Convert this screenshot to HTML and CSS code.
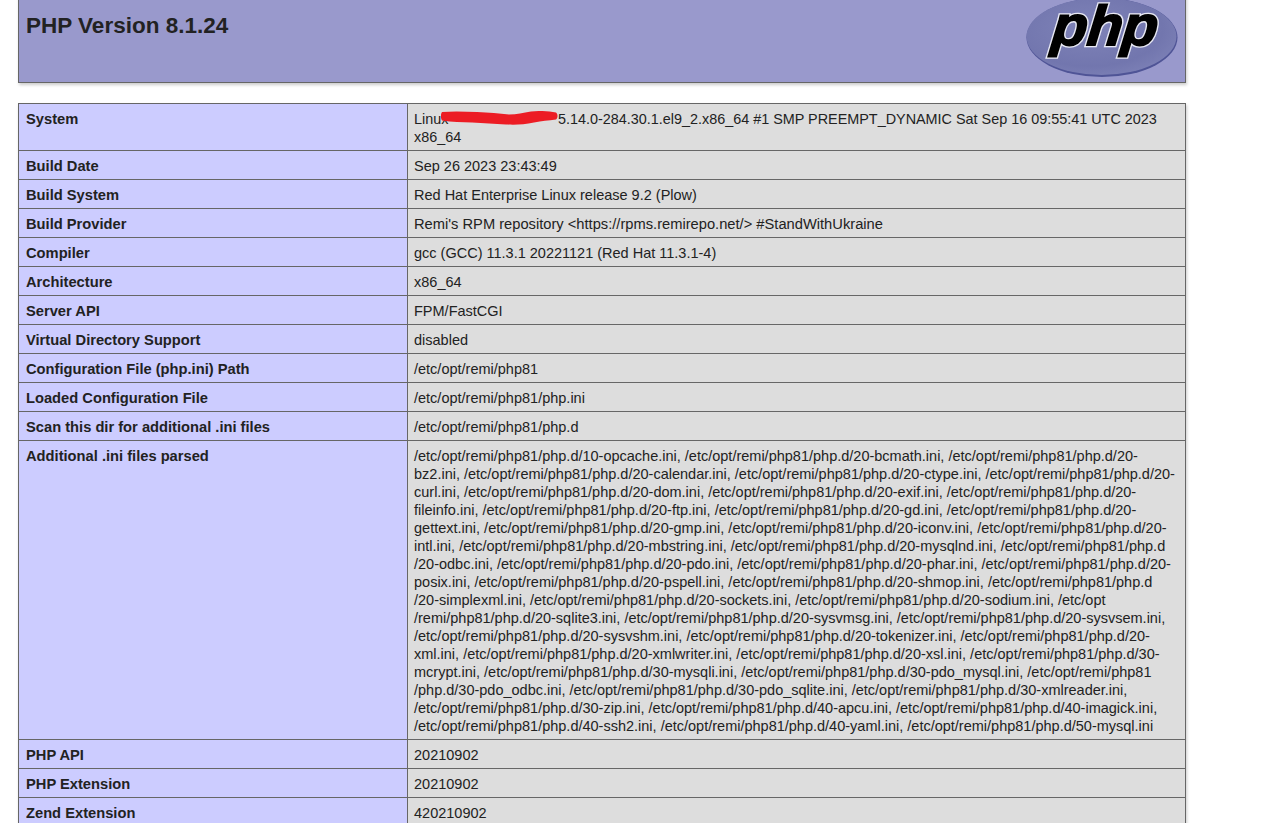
FILE: index.html
```html
<!DOCTYPE html>
<html lang="en">
<head>
<meta charset="utf-8">
<title>PHP 8.1.24 - phpinfo()</title>
<link rel="stylesheet" href="styles.css">
</head>
<body>
<div class="center">
<table class="tbl head-table">
<tr class="h"><td>
<div class="head-row">
<h1 class="p">PHP Version 8.1.24</h1>
<svg class="logo" viewBox="0 0 152 80" role="img" aria-label="PHP logo">
<defs>
<radialGradient id="oval" cx="0.42" cy="0.4" r="0.75">
<stop offset="0" stop-color="#7f83b8"/>
<stop offset="0.65" stop-color="#7276ae"/>
<stop offset="0.95" stop-color="#7f83b8"/>
</radialGradient>
</defs>
<ellipse cx="76" cy="39.500" rx="75.500" ry="39.500" fill="#4f5496"/>
<ellipse cx="75.500" cy="38.500" rx="75" ry="38.500" fill="url(#oval)"/>
<g transform="translate(8 0) skewX(-6) scale(1.03 1)">
<text class="logo-halo" x="21" y="47">php</text>
<text class="logo-text" x="21" y="47">php</text>
</g>
</svg>
</div>
</td></tr>
</table>
<div class="sys-wrap">
<table class="tbl">
<tr><td class="e">System</td><td class="v v-narrow">Linux<span class="host"></span>5.14.0-284.30.1.el9_2.x86_64 #1 SMP PREEMPT_DYNAMIC Sat Sep 16 09:55:41 UTC 2023 x86_64</td></tr>
<tr><td class="e">Build Date</td><td class="v">Sep 26 2023 23:43:49</td></tr>
<tr><td class="e">Build System</td><td class="v">Red Hat Enterprise Linux release 9.2 (Plow)</td></tr>
<tr><td class="e">Build Provider</td><td class="v v-wide">Remi's RPM repository &lt;https://rpms.remirepo.net/&gt; #StandWithUkraine</td></tr>
<tr><td class="e">Compiler</td><td class="v">gcc (GCC) 11.3.1 20221121 (Red Hat 11.3.1-4)</td></tr>
<tr><td class="e">Architecture</td><td class="v">x86_64</td></tr>
<tr><td class="e">Server API</td><td class="v">FPM/FastCGI</td></tr>
<tr><td class="e">Virtual Directory Support</td><td class="v">disabled</td></tr>
<tr><td class="e">Configuration File (php.ini) Path</td><td class="v">/etc/opt/remi/php81</td></tr>
<tr><td class="e">Loaded Configuration File</td><td class="v">/etc/opt/remi/php81/php.ini</td></tr>
<tr><td class="e">Scan this dir for additional .ini files</td><td class="v">/etc/opt/remi/php81/php.d</td></tr>
<tr><td class="e">Additional .ini files parsed</td><td class="v">/etc/opt/remi/php81/php.d/10-opcache.ini, /etc/opt/remi/php81/php.d/20-bcmath.ini, /etc/opt/remi/php81/php.d/20-bz2.ini, /etc/opt/remi/php81/php.d/20-calendar.ini, /etc/opt/remi/php81/php.d/20-ctype.ini, /etc/opt/remi/php81/php.d/20-curl.ini, /etc/opt/remi/php81/php.d/20-dom.ini, /etc/opt/remi/php81/php.d/20-exif.ini, /etc/opt/remi/php81/php.d/20-fileinfo.ini, /etc/opt/remi/php81/php.d/20-ftp.ini, /etc/opt/remi/php81/php.d/20-gd.ini, /etc/opt/remi/php81/php.d/20-gettext.ini, /etc/opt/remi/php81/php.d/20-gmp.ini, /etc/opt/remi/php81/php.d/20-iconv.ini, /etc/opt/remi/php81/php.d/20-intl.ini, /etc/opt/remi/php81/php.d/20-mbstring.ini, /etc/opt/remi/php81/php.d/20-mysqlnd.ini, /etc/opt/remi/php81/php.d<wbr>/20-odbc.ini, /etc/opt/remi/php81/php.d/20-pdo.ini, /etc/opt/remi/php81/php.d/20-phar.ini, /etc/opt/remi/php81/php.d/20-posix.ini, /etc/opt/remi/php81/php.d/20-pspell.ini, /etc/opt/remi/php81/php.d/20-shmop.ini, /etc/opt/remi/php81/php.d<br>/20-simplexml.ini, /etc/opt/remi/php81/php.d/20-sockets.ini, /etc/opt/remi/php81/php.d/20-sodium.ini, /etc/opt<wbr>/remi/php81/php.d/20-sqlite3.ini, /etc/opt/remi/php81/php.d/20-sysvmsg.ini, /etc/opt/remi/php81/php.d/20-sysvsem.ini, /etc/opt/remi/php81/php.d/20-sysvshm.ini, /etc/opt/remi/php81/php.d/20-tokenizer.ini, /etc/opt/remi/php81/php.d/20-xml.ini, /etc/opt/remi/php81/php.d/20-xmlwriter.ini, /etc/opt/remi/php81/php.d/20-xsl.ini, /etc/opt/remi/php81/php.d/30-mcrypt.ini, /etc/opt/remi/php81/php.d/30-mysqli.ini, /etc/opt/remi/php81/php.d/30-pdo_mysql.ini, /etc/opt/remi/php81<wbr>/php.d/30-pdo_odbc.ini, /etc/opt/remi/php81/php.d/30-pdo_sqlite.ini, /etc/opt/remi/php81/php.d/30-xmlreader.ini, /etc/opt/remi/php81/php.d/30-zip.ini, /etc/opt/remi/php81/php.d/40-apcu.ini, /etc/opt/remi/php81/php.d/40-imagick.ini, /etc/opt/remi/php81/php.d/40-ssh2.ini, /etc/opt/remi/php81/php.d/40-yaml.ini, /etc/opt/remi/php81/php.d/50-mysql.ini</td></tr>
<tr><td class="e">PHP API</td><td class="v">20210902</td></tr>
<tr><td class="e">PHP Extension</td><td class="v">20210902</td></tr>
<tr><td class="e">Zend Extension</td><td class="v">420210902</td></tr>
</table>
<svg class="scribble" viewBox="0 0 118 14" aria-hidden="true">
<path d="M1 1C12 0 24 .5 36 1C48 1.500 58 2.500 68 3.500C76 3.500 82 1.500 90 .5C99 -.5 108 0 115 1.500C117 3 117 7 115 8.500C107 9.500 101 10 93 11.500C83 13.500 75 14 65 13.500C53 13 43 12 31 11.500C21 11 11 11 1 9.500C-.5 7 -.5 3 1 1z" fill="#ec1c24"/>
</svg>
</div>
</div>
</body>
</html>
```
FILE: styles.css
```css
html, body {
  margin: 0;
  padding: 0;
  background: #fff;
  overflow: hidden;
  height: 823px;
}
body {
  font-family: "Liberation Sans", Arial, sans-serif;
  color: #222;
}
.center {
  width: 1168px;
  margin-left: 18px;
}
.tbl {
  border-collapse: collapse;
  width: 1168px;
  table-layout: fixed;
  box-shadow: 1px 2px 3px #ccc;
  font-size: 14.5px;
  line-height: 18px;
}
.tbl td {
  border: 1px solid #666;
  padding: 6px 6px 4px;
  vertical-align: top;
}
.head-table {
  margin-top: -10px;
  margin-bottom: 20px;
}
.tbl .h td {
  background: #99c;
  height: 81px;
  padding: 0;
  box-sizing: border-box;
}
.head-row {
  display: flex;
  justify-content: space-between;
  align-items: flex-start;
  height: 91px;
}
.p {
  margin: 21px 0 0 7px;
  font-size: 22.5px;
  line-height: 27px;
  font-weight: bold;
  color: #222;
}
.logo {
  width: 152px;
  height: 80px;
  margin: 7px 7px 0 0;
  flex: none;
}
.logo-text, .logo-halo {
  font-family: "Liberation Sans", Arial, sans-serif;
  font-size: 56px;
  font-weight: bold;
  font-style: italic;
}
.logo-text {
  fill: #000;
  stroke: #000;
  stroke-width: 1.8px;
}
.logo-halo {
  fill: #fff;
  stroke: #e8e9f4;
  stroke-width: 4.5px;
}
.tbl .e {
  background: #ccf;
  width: 376px;
  padding-left: 7px;
  padding-right: 5px;
  font-size: 14.7px;
  font-weight: bold;
}
.v {
  background: #ddd;
  overflow-wrap: break-word;
}
.v-narrow {
  font-size: 14.4px;
}
.v-wide {
  font-size: 14.7px;
}
.host {
  display: inline-block;
  width: 109.500px;
}
.scribble {
  position: absolute;
  left: 423px;
  top: 8px;
  width: 118px;
  height: 14px;
}
.sys-wrap {
  position: relative;
}
```
